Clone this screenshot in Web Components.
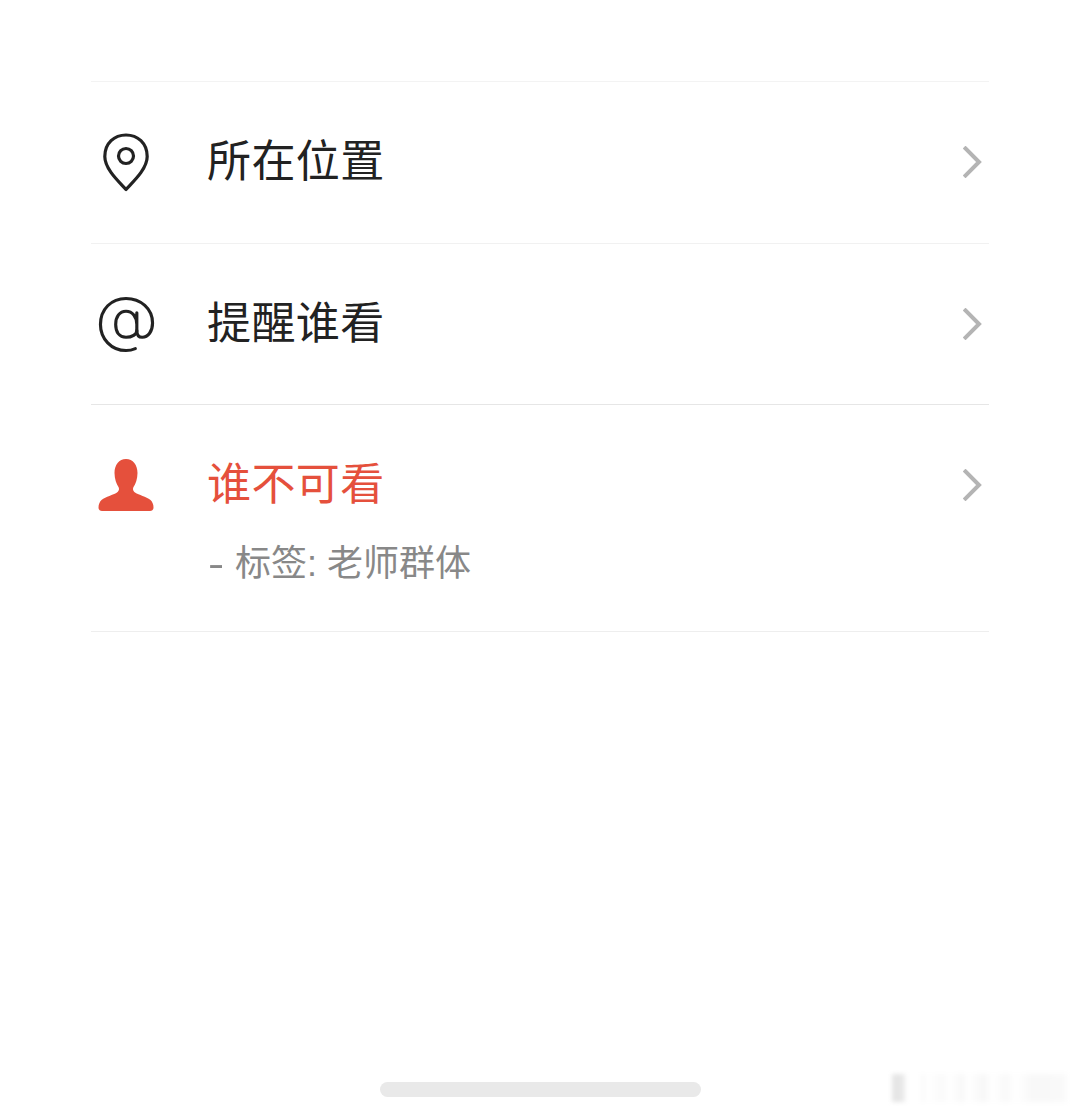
<!DOCTYPE html>
<html lang="zh">
<head>
<meta charset="utf-8">
<title>谁不可看</title>
<style>
  html, body { margin: 0; background: #fff; }
  body { font-family: "Noto Sans CJK SC", "Liberation Sans", sans-serif; }
</style>
</head>
<body>
<template id="option-list-tmpl">
  <style>
    :host { display: block; margin: 81px 91px 0; border-top: 1px solid #f3f3f3; }
  </style>
  <slot></slot>
</template>

<template id="option-row-tmpl">
  <style>
    :host {
      display: grid;
      grid-template-columns: 116px 1fr 26px;
      padding-top: 40px;
      padding-bottom: var(--pad-bottom, 40px);
      border-bottom: 1px solid var(--line, #f1f1f1);
      color: var(--text, #222);
    }
    .icon { width: 70px; height: 80px; display: flex; align-items: center; justify-content: center; }
    .label { font-size: 44px; letter-spacing: .4px; line-height: 73px; height: 80px; }
    .chevron { height: 80px; display: flex; align-items: center; }
    .sub {
      grid-column: 2;
      margin-top: 14px;
      margin-left: 1px;
      font-family: "Liberation Sans", "Noto Sans CJK SC", sans-serif;
      font-size: 36px;
      line-height: 50px;
      color: #888;
    }
    .sub .dash { display: inline-block; width: 27px; transform: scaleX(1.35); transform-origin: left; }
    .sub:empty { display: none; }
  </style>
  <div class="icon"><slot name="icon"></slot></div>
  <div class="label"><slot></slot></div>
  <div class="chevron">
    <svg width="20" height="32" viewBox="0 0 20 32" fill="none" stroke="#b4b4b4" stroke-width="4" stroke-linecap="square" stroke-linejoin="miter">
      <path d="M2.5 2.5 L16 16 L2.5 29.5"/>
    </svg>
  </div>
  <div class="sub"></div>
</template>

<template id="home-bar-tmpl">
  <style>
    :host {
      display: block;
      position: absolute;
      left: 380px;
      top: 1082px;
      width: 321px;
      height: 15px;
      border-radius: 8px;
      background: #e9e9e9;
    }
  </style>
</template>

<template id="water-mark-tmpl">
  <style>
    :host {
      display: block;
      position: absolute;
      left: 892px;
      top: 1074px;
      width: 180px;
      height: 28px;
      filter: blur(2px);
      background: linear-gradient(90deg,
        #e6e6e6 0, #e6e6e6 10px, #fff 15px, #fff 28px, #f9f9f9 30px, #fff 36px,
        #fafafa 50px, #fff 58px, #f8f8f8 70px, #fff 76px, #f7f7f7 92px, #fff 100px,
        #f9f9f9 114px, #fff 124px, #f8f8f8 140px, #f9f9f9 170px, #fff 178px);
    }
  </style>
</template>

<script>
  function stamp(host, id) {
    const root = host.attachShadow({ mode: 'open' });
    root.append(document.getElementById(id).content.cloneNode(true));
    return root;
  }

  customElements.define('option-list', class extends HTMLElement {
    constructor() { super(); stamp(this, 'option-list-tmpl'); }
  });

  customElements.define('option-row', class extends HTMLElement {
    constructor() {
      super();
      this.root = stamp(this, 'option-row-tmpl');
    }
    connectedCallback() {
      const sub = this.getAttribute('sub');
      if (!sub) return;
      // the leading dash is longer than a plain hyphen, so it gets its own box
      const box = this.root.querySelector('.sub');
      const dash = document.createElement('span');
      dash.className = 'dash';
      dash.textContent = sub.slice(0, 1);
      box.append(dash, sub.slice(2));
    }
  });

  customElements.define('home-bar', class extends HTMLElement {
    constructor() { super(); stamp(this, 'home-bar-tmpl'); }
  });

  customElements.define('water-mark', class extends HTMLElement {
    constructor() { super(); stamp(this, 'water-mark-tmpl'); }
  });
</script>

<option-list>
  <option-row style="--pad-bottom:41px">
    <svg slot="icon" width="50" height="60" viewBox="0 0 50 60" fill="none" stroke="#222" stroke-width="3.2">
      <path d="M25 57.500 C20.500 52 3.800 38 3.800 24.500 C3.800 11 13.500 3 25 3 C36.500 3 46.200 11 46.200 24.500 C46.200 38 29.500 52 25 57.500 Z" stroke-linejoin="round"/>
      <circle cx="25" cy="24" r="7.500"/>
    </svg>
    所在位置
  </option-row>
  <option-row style="--line:#e6e6e6">
    <svg slot="icon" width="57" height="57" viewBox="0 0 58 58" fill="none" stroke="#222" stroke-width="3.2" stroke-linecap="round">
      <path d="M38 53.500 C35 54.800 32 55.500 28.500 55.500 C13.500 55.500 2.500 43.500 2.500 29 C2.500 13.500 13.500 2.500 28.500 2.500 C43.500 2.500 55.500 13 55.500 27.500 C55.500 36 51 42 45 42 C41 42 39.500 39 39.500 35"/>
      <path d="M39.500 17 V35 C39.500 39 34.500 42 28.500 42 C21.500 42 18 36.500 18 29 C18 21 22 15.500 28.500 15.500 C35 15.500 39.500 21 39.500 29"/>
    </svg>
    提醒谁看
  </option-row>
  <option-row sub="- 标签: 老师群体" style="--text:#e5503c;--line:#eeeeee;--pad-bottom:42px">
    <svg slot="icon" width="56" height="52" viewBox="0 0 56 52" fill="#e5503c">
      <path d="M28 0 C35 0 39.500 6 39.500 14 C39.500 20 37.500 25 35.500 28 C34.500 30 35 32 37 33.500 C41 36 48 37.500 52.500 41 C54.500 43 55.500 45.500 55.500 48.500 C55.500 51 54 52 52 52 L4 52 C2 52 .5 51 .5 48.500 C.5 45.500 1.500 43 3.500 41 C8 37.500 15 36 19 33.500 C21 32 21.500 30 20.500 28 C18.500 25 16.500 20 16.500 14 C16.500 6 21 0 28 0 Z"/>
    </svg>
    谁不可看
  </option-row>
</option-list>
<home-bar></home-bar>
<water-mark></water-mark>
</body>
</html>
